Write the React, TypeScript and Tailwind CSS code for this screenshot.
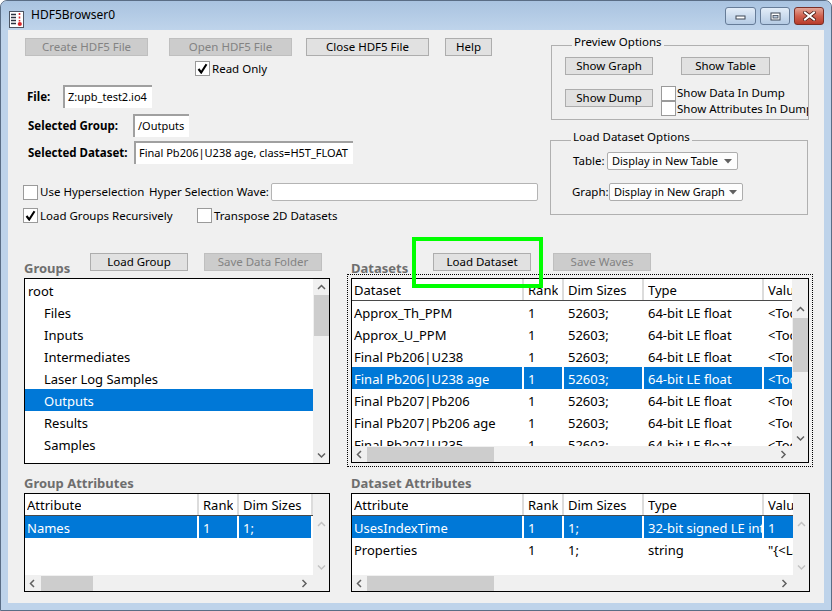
import React from 'react';
import clsx from 'clsx';

// column widths for the two wide tables and the two narrow ones
const DS_COLS = ['w-[172px]', 'w-[40px]', 'w-[80px]', 'w-[120px]', 'w-[140px]'];
const GA_COLS = ['w-[174px]', 'w-[40px]', 'w-[74px]', 'w-[120px]', 'w-[120px]'];

const datasets = [
  ['Approx_Th_PPM', '1', '52603;', '64-bit LE float', '<Too big to display>'],
  ['Approx_U_PPM', '1', '52603;', '64-bit LE float', '<Too big to display>'],
  ['Final Pb206|U238', '1', '52603;', '64-bit LE float', '<Too big to display>'],
  ['Final Pb206|U238 age', '1', '52603;', '64-bit LE float', '<Too big to display>'],
  ['Final Pb207|Pb206', '1', '52603;', '64-bit LE float', '<Too big to display>'],
  ['Final Pb207|Pb206 age', '1', '52603;', '64-bit LE float', '<Too big to display>'],
  ['Final Pb207|U235', '1', '52603;', '64-bit LE float', '<Too big to display>'],
];

const groups = ['root', 'Files', 'Inputs', 'Intermediates', 'Laser Log Samples', 'Outputs', 'Results', 'Samples'];

function Chev({ dir, off }: { dir: 'up' | 'down' | 'left' | 'right'; off?: boolean }) {
  const d = {
    up: 'M1 5 L4.5 1.5 L8 5',
    down: 'M1 1.5 L4.5 5 L8 1.5',
    left: 'M5 1 L1.5 4.5 L5 8',
    right: 'M1.5 1 L5 4.5 L1.5 8',
  }[dir];
  const v = dir === 'up' || dir === 'down';
  return (
    <svg width={v ? 9 : 7} height={v ? 7 : 9} viewBox={v ? '0 0 9 7' : '0 0 7 9'}>
      <path d={d} fill="none" stroke={off ? '#c2c2c2' : '#606060'} strokeWidth="1.5" />
    </svg>
  );
}

function Btn({ className, off, children }: { className: string; off?: boolean; children: React.ReactNode }) {
  return (
    <div
      className={clsx(
        'h-[18px] shrink-0 flex items-center justify-center border text-[11.5px] leading-none whitespace-nowrap',
        off ? 'bg-[#cccccc] border-[#bfbfbf] text-[#838383]' : 'bg-[#e1e1e1] border-[#adadad] text-black',
        className,
      )}
    >
      {children}
    </div>
  );
}

function Check({ on }: { on?: boolean }) {
  return (
    <div className="w-[15px] h-[15px] shrink-0 bg-white border border-[#9a9a9a] flex items-center justify-center">
      {on && (
        <svg width="11" height="11" viewBox="0 0 11 11">
          <path d="M1.5 6 L4.2 9.5 L9.5 1.2" fill="none" stroke="#000" strokeWidth="2.1" />
        </svg>
      )}
    </div>
  );
}

function Field({ className, children }: { className: string; children?: React.ReactNode }) {
  return (
    <div
      className={clsx(
        'h-[23px] shrink-0 bg-white border-t-2 border-l-2 border-t-[#a0a0a0] border-l-[#a0a0a0] flex items-center pl-[3px] text-[11px] whitespace-nowrap overflow-hidden',
        className,
      )}
    >
      {children}
    </div>
  );
}

function Popup({ className, children }: { className: string; children: React.ReactNode }) {
  return (
    <div
      className={clsx(
        'h-[18px] shrink-0 bg-[#fdfdfd] border border-[#adadad] rounded-[2px] flex items-center justify-between pl-[4px] pr-[5px] text-[11px] whitespace-nowrap',
        className,
      )}
    >
      <span>{children}</span>
      <svg width="8" height="5" viewBox="0 0 8 5">
        <path d="M0 0 H8 L4 4.5 Z" fill="#606060" />
      </svg>
    </div>
  );
}

function VScroll({ h, gap, thumb, off }: { h: string; gap?: string; thumb?: string; off?: boolean }) {
  return (
    <div className={clsx('w-[16px] shrink-0 bg-[#f0f0f0] flex flex-col items-center', h)}>
      <div className="h-[16px] w-full flex items-center justify-center shrink-0">
        <Chev dir="up" off={off} />
      </div>
      {thumb && (
        <>
          <div className={gap} />
          <div className={clsx('w-[15px] bg-[#cdcdcd] shrink-0', thumb)} />
        </>
      )}
      <div className="flex-1" />
      <div className="h-[16px] w-full flex items-center justify-center shrink-0">
        <Chev dir="down" off={off} />
      </div>
    </div>
  );
}

function HScroll({ w, thumb }: { w: string; thumb: string }) {
  return (
    <div className="flex h-[16px] shrink-0">
      <div className={clsx('h-[16px] bg-[#f0f0f0] flex items-center', w)}>
        <div className="w-[15px] h-full flex items-center justify-center shrink-0">
          <Chev dir="left" />
        </div>
        <div className={clsx('h-[15px] bg-[#cdcdcd] shrink-0', thumb)} />
        <div className="flex-1" />
        <div className="w-[17px] h-full flex items-center justify-center shrink-0">
          <Chev dir="right" />
        </div>
      </div>
      <div className="w-[16px] h-[16px] bg-[#f0f0f0]" />
    </div>
  );
}

function Row({ widths, cells, sel, head }: { widths: string[]; cells: string[]; sel?: boolean; head?: boolean }) {
  return (
    <div
      className={clsx(
        'flex h-[22px] shrink-0',
        head && 'bg-white border-b border-[#4a4a4a]',
        sel && 'bg-[#0078d7] text-white',
      )}
    >
      {cells.map((c, i) => (
        <div
          key={i}
          className={clsx(
            widths[i],
            'shrink-0 flex items-center pt-[3px] overflow-hidden whitespace-nowrap border-r-2',
            i === 0 ? 'pl-[2px]' : 'pl-[4px]',
            head ? 'border-[#dcdcdc]' : 'border-white',
          )}
        >
          <span className="overflow-hidden">{c}</span>
        </div>
      ))}
    </div>
  );
}

function SectionLabel({ children }: { children: React.ReactNode }) {
  return <div className="text-[13px] font-bold text-[#6e6e6e] leading-[16px] whitespace-nowrap">{children}</div>;
}

function TitleBar() {
  return (
    <div className="h-[29px] shrink-0 flex items-start bg-gradient-to-b from-[#a9c3e0] to-[#bfd4eb] rounded-t-[6px]">
      <svg className="ml-[8px] mt-[10px]" width="15" height="17" viewBox="0 0 15 17">
        <rect x="0.5" y="0.5" width="14" height="16" fill="#fff" stroke="#4d5563" />
        <path d="M2 3.5 H7 M2 6.5 H7 M2 9.5 H7 M2 12.5 H7" stroke="#2c3340" strokeWidth="1.4" />
        <path d="M10.5 2 V4 M10.5 5.5 V7.5 M10.5 9 V10.5" stroke="#d8262b" strokeWidth="1.6" />
        <circle cx="10.8" cy="13" r="2.1" fill="#d8262b" />
      </svg>
      <div className="ml-[7px] mt-[6px] text-[12px] leading-[16px] text-black">HDF5Browser0</div>
      <div className="flex-1" />
      <div className="flex gap-[4px] mt-[6px] mr-[7px]">
        <div className="w-[31px] h-[18px] rounded-[3px] border border-[#667c98] bg-gradient-to-b from-[#e3edf8] to-[#b5cbe4] flex items-center justify-center">
          <svg width="11" height="8" viewBox="0 0 11 8">
            <rect x="1" y="4" width="9" height="3" fill="#fff" stroke="#3d4654" />
          </svg>
        </div>
        <div className="w-[30px] h-[18px] rounded-[3px] border border-[#667c98] bg-gradient-to-b from-[#e3edf8] to-[#b5cbe4] flex items-center justify-center">
          <svg width="11" height="9" viewBox="0 0 11 9">
            <rect x="1" y="1" width="9" height="7" fill="#fff" stroke="#3d4654" />
            <rect x="3" y="3.5" width="5" height="2.5" fill="#bccde2" stroke="#3d4654" strokeWidth="0.8" />
          </svg>
        </div>
        <div className="w-[30px] h-[18px] rounded-[3px] border border-[#7a2f26] bg-gradient-to-b from-[#e2a597] via-[#d0614f] to-[#b83b2a] flex items-center justify-center">
          <svg width="13" height="10" viewBox="0 0 13 10">
            <path d="M2 1.5 L11 8.5 M11 1.5 L2 8.5" stroke="#4a1d17" strokeWidth="3.6" strokeLinecap="square" />
            <path d="M2 1.5 L11 8.5 M11 1.5 L2 8.5" stroke="#fff" strokeWidth="2" strokeLinecap="square" />
          </svg>
        </div>
      </div>
    </div>
  );
}

function TopSection() {
  return (
    <div className="h-[223px] shrink-0 flex">
      {/* left column */}
      <div className="w-[534px] shrink-0 flex flex-col text-[11.5px]">
        <div className="mt-[8px] pl-[17px] flex">
          <Btn className="w-[123px]" off>Create HDF5 File</Btn>
          <Btn className="w-[123px] ml-[21px]" off>Open HDF5 File</Btn>
          <Btn className="w-[123px] ml-[14px]">Close HDF5 File</Btn>
          <Btn className="w-[47px] ml-[16px]">Help</Btn>
        </div>
        <div className="mt-[5px] pl-[187px] h-[15px] flex items-center gap-[2px]">
          <Check on />
          <span>Read Only</span>
        </div>
        <div className="mt-[9px] pl-[19px] flex items-center">
          <div className="w-[36px] shrink-0 font-bold">File:</div>
          <Field className="w-[89px]">Z:upb_test2.io4</Field>
        </div>
        <div className="mt-[6px] pl-[20px] flex items-center">
          <div className="w-[105px] shrink-0 font-bold">Selected Group:</div>
          <Field className="w-[56px]">/Outputs</Field>
        </div>
        <div className="mt-[4px] pl-[20px] flex items-center">
          <div className="w-[106px] shrink-0 font-bold">Selected Dataset:</div>
          <Field className="w-[219px]">Final Pb206|U238 age, class=H5T_FLOAT</Field>
        </div>
        <div className="mt-[19px] pl-[15px] h-[18px] flex items-center whitespace-nowrap">
          <Check />
          <span className="ml-[2px] w-[109px] shrink-0">Use Hyperselection</span>
          <span className="w-[122px] shrink-0">Hyper Selection Wave:</span>
          <div className="w-[267px] h-[18px] shrink-0 bg-white border border-[#b4b4b4] rounded-[2px]" />
        </div>
        <div className="mt-[7px] pl-[15px] h-[15px] flex items-center whitespace-nowrap">
          <Check on />
          <span className="ml-[2px] w-[157px] shrink-0">Load Groups Recursively</span>
          <Check />
          <span className="ml-[2px]">Transpose 2D Datasets</span>
        </div>
      </div>

      {/* right column: option boxes */}
      <div className="flex flex-col text-[11.5px]">
        <div className="mt-[15px] ml-[9px] w-[258px] h-[75px] border border-[#b0b0b0] flex flex-col">
          <div className="-mt-[12px] ml-[20px] px-[2px] w-fit bg-[#f0f0f0] leading-[16px]">Preview Options</div>
          <div className="mt-[7px] flex">
            <Btn className="w-[88px] ml-[13px]">Show Graph</Btn>
            <Btn className="w-[89px] ml-[28px]">Show Table</Btn>
          </div>
          <div className="flex mt-[10px]">
            <Btn className="w-[88px] ml-[13px] mt-[4px]">Show Dump</Btn>
            <div className="ml-[8px] w-[148px] flex flex-col overflow-hidden">
              <div className="flex items-center h-[16px] gap-[1px] whitespace-nowrap">
                <Check />
                <span>Show Data In Dump</span>
              </div>
              <div className="flex items-center h-[15px] gap-[1px] whitespace-nowrap">
                <Check />
                <span>Show Attributes In Dump</span>
              </div>
            </div>
          </div>
        </div>

        <div className="mt-[20px] ml-[8px] w-[258px] h-[75px] border border-[#b0b0b0] flex flex-col">
          <div className="-mt-[12px] ml-[20px] px-[2px] w-fit bg-[#f0f0f0] leading-[16px]">Load Dataset Options</div>
          <div className="mt-[7px] ml-[22px] flex items-center">
            <span className="w-[34px]">Table:</span>
            <Popup className="w-[131px]">Display in New Table</Popup>
          </div>
          <div className="mt-[13px] ml-[21px] flex items-center">
            <span className="w-[37px]">Graph:</span>
            <Popup className="w-[134px]">Display in New Graph</Popup>
          </div>
        </div>
      </div>
    </div>
  );
}

function MiddleSection() {
  return (
    <div className="h-[214px] shrink-0 flex">
      {/* Groups */}
      <div className="ml-[16px] w-[306px] shrink-0 flex flex-col">
        <div className="h-[18px] flex items-start">
          <div className="w-[66px] mt-[7px]">
            <SectionLabel>Groups</SectionLabel>
          </div>
          <Btn className="w-[98px]">Load Group</Btn>
          <Btn className="w-[118px] ml-[16px]" off>Save Data Folder</Btn>
        </div>
        <div className="mt-[7px] w-[306px] h-[186px] border border-black bg-white flex">
          <div className="w-[288px] flex flex-col text-[13px]">
            {groups.map((g, i) => (
              <div
                key={g}
                className={clsx(
                  'h-[22px] flex items-center pt-[3px] shrink-0',
                  i === 0 ? 'pl-[3px]' : 'pl-[19px]',
                  g === 'Outputs' && 'bg-[#0078d7] text-white',
                )}
              >
                {g}
              </div>
            ))}
          </div>
          <VScroll h="h-[184px]" gap="h-0" thumb="h-[41px]" />
        </div>
      </div>

      {/* Datasets */}
      <div className="ml-[17px] w-[466px] shrink-0 flex flex-col relative">
        <div className="h-[18px] flex items-start">
          <div className="w-[86px] pl-[4px] mt-[7px]">
            <SectionLabel>Datasets</SectionLabel>
          </div>
          <Btn className="w-[98px]">Load Dataset</Btn>
          <Btn className="w-[98px] ml-[22px]" off>Save Waves</Btn>
        </div>
        <div className="mt-[3px] w-[466px] h-[193px] border border-dotted border-black p-[3px]">
          <div className="w-[458px] h-[185px] border border-black bg-white flex flex-col text-[13px]">
            <div className="flex">
              <div className="w-[440px] overflow-hidden">
                <Row head widths={DS_COLS} cells={['Dataset', 'Rank', 'Dim Sizes', 'Type', 'Value']} />
              </div>
              <div className="w-[16px] h-[22px] bg-[#f0f0f0]" />
            </div>
            <div className="flex">
              <div className="w-[440px] h-[145px] overflow-hidden flex flex-col">
                {datasets.map((r, i) => (
                  <Row key={r[0]} widths={DS_COLS} cells={r} sel={i === 3} />
                ))}
              </div>
              <VScroll h="h-[145px]" gap="h-px" thumb="h-[54px]" />
            </div>
            <HScroll w="w-[440px]" thumb="w-[127px]" />
          </div>
        </div>
        {/* highlight drawn over the Load Dataset button */}
        <div className="absolute left-[65px] top-[-16px] w-[131px] h-[51px] border-[4px] border-[#00ff00]" />
      </div>
    </div>
  );
}

function BottomSection() {
  return (
    <div className="mt-[8px] flex">
      <div className="ml-[16px] w-[306px] shrink-0 flex flex-col">
        <SectionLabel>Group Attributes</SectionLabel>
        <div className="mt-[2px] w-[306px] h-[99px] border border-black bg-white flex flex-col text-[13px]">
          <div className="flex">
            <div className="w-[288px] overflow-hidden">
              <Row head widths={GA_COLS} cells={['Attribute', 'Rank', 'Dim Sizes', 'Type', 'Value']} />
            </div>
            <div className="w-[16px] h-[22px] bg-[#f0f0f0]" />
          </div>
          <div className="flex">
            <div className="w-[288px] h-[59px] overflow-hidden flex flex-col">
              <Row widths={GA_COLS} cells={['Names', '1', '1;', 'string', '"Names"']} sel />
            </div>
            <VScroll h="h-[59px]" off />
          </div>
          <HScroll w="w-[288px]" thumb="w-[52px] ml-px" />
        </div>
      </div>

      <div className="ml-[21px] w-[459px] shrink-0 flex flex-col">
        <SectionLabel>Dataset Attributes</SectionLabel>
        <div className="mt-[2px] w-[459px] h-[99px] border border-black bg-white flex flex-col text-[13px]">
          <div className="flex">
            <div className="w-[441px] overflow-hidden">
              <Row head widths={DS_COLS} cells={['Attribute', 'Rank', 'Dim Sizes', 'Type', 'Value']} />
            </div>
            <div className="w-[16px] h-[22px] bg-[#f0f0f0]" />
          </div>
          <div className="flex">
            <div className="w-[441px] h-[59px] overflow-hidden flex flex-col">
              <Row widths={DS_COLS} cells={['UsesIndexTime', '1', '1;', '32-bit signed LE int', '1']} sel />
              <Row widths={DS_COLS} cells={['Properties', '1', '1;', 'string', '"{<LaserLog>}"']} />
            </div>
            <VScroll h="h-[59px]" off />
          </div>
          <HScroll w="w-[441px]" thumb="w-[127px]" />
        </div>
      </div>
    </div>
  );
}

export default function App() {
  return (
    <div className="w-[832px] h-[611px] bg-white font-['Noto_Sans',sans-serif] text-black">
      <div className="w-[832px] h-[611px] rounded-t-[7px] border border-[#5a6d85] bg-[#bed3ea] flex flex-col overflow-hidden">
        <TitleBar />
        <div className="mx-[7px] h-[573px] shrink-0 bg-[#f0f0f0] flex flex-col">
          <TopSection />
          <MiddleSection />
          <BottomSection />
        </div>
      </div>
    </div>
  );
}
